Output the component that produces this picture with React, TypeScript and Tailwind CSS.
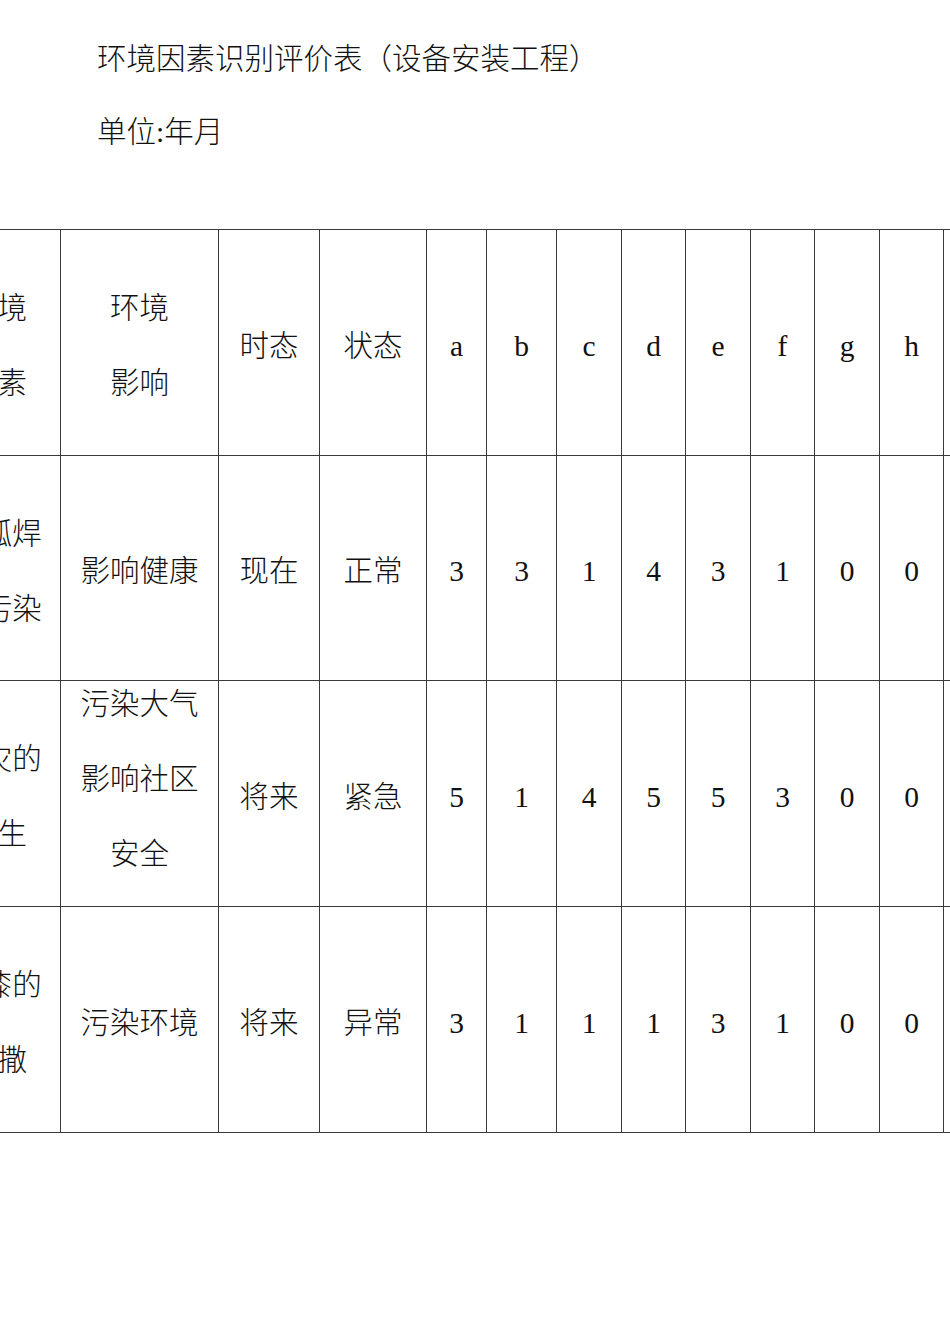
const cols = "grid-cols-[126px_158px_101px_107px_60px_70px_65px_64px_65px_64px_65px_64px_80px]"

type Row = {
  h: string
  factor: string[]
  impact: string[]
  shift?: boolean
  tense: string
  state: string
  scores: string[]
}

const rows: Row[] = [
  {
    h: "h-[225px]",
    factor: ["电弧焊", "烟污染"],
    impact: ["影响健康"],
    tense: "现在",
    state: "正常",
    scores: ["3", "3", "1", "4", "3", "1", "0", "0"],
  },
  {
    h: "h-[226px]",
    factor: ["火灾的", "发生"],
    impact: ["污染大气", "影响社区", "安全"],
    shift: true,
    tense: "将来",
    state: "紧急",
    scores: ["5", "1", "4", "5", "5", "3", "0", "0"],
  },
  {
    h: "h-[226px]",
    factor: ["油漆的", "遗撒"],
    impact: ["污染环境"],
    tense: "将来",
    state: "异常",
    scores: ["3", "1", "1", "1", "3", "1", "0", "0"],
  },
]

const letters = ["a", "b", "c", "d", "e", "f", "g", "h"]

function Cell({ h, children }: { h: string; children?: React.ReactNode }) {
  return (
    <div className={`${h} pt-[7px] border-r border-b border-[#3a3a3a] flex items-center justify-center text-center leading-[75px]`}>
      {children}
    </div>
  )
}

function Lines({ lines, shift }: { lines: string[]; shift?: boolean }) {
  return (
    <div className={shift ? "mb-[36px]" : ""}>
      {lines.map((l, i) => (
        <div key={i} className="whitespace-nowrap">{l}</div>
      ))}
    </div>
  )
}

export default function App() {
  return (
    <div className="w-[950px] h-[1344px] overflow-hidden bg-white text-[#111] font-['Liberation_Serif','Noto_Sans_CJK_SC',serif] font-light text-[29.5px]">
      <div className="pl-[97px] pt-[39px]">
        <p className="leading-[40px] whitespace-nowrap">
          环境因素识别评价表
          <span className="inline-block w-[1em] text-right">（</span>
          设备安装工程
          <span className="inline-block w-[1em] text-left">）</span>
        </p>
        <p className="mt-[33px] leading-[40px]">单位:年月</p>
      </div>

      <div className={`mt-[77px] ml-[-66px] w-max grid ${cols} border-t border-l border-[#3a3a3a]`}>
        <Cell h="h-[226px]"><Lines lines={["环境", "因素"]} /></Cell>
        <Cell h="h-[226px]"><Lines lines={["环境", "影响"]} /></Cell>
        <Cell h="h-[226px]">时态</Cell>
        <Cell h="h-[226px]">状态</Cell>
        {letters.map((l) => (
          <Cell key={l} h="h-[226px]">{l}</Cell>
        ))}
        <Cell h="h-[226px]" />

        {rows.map((r, i) => (
          <div key={i} className="contents">
            <Cell h={r.h}><Lines lines={r.factor} /></Cell>
            <Cell h={r.h}><Lines lines={r.impact} shift={r.shift} /></Cell>
            <Cell h={r.h}>{r.tense}</Cell>
            <Cell h={r.h}>{r.state}</Cell>
            {r.scores.map((s, j) => (
              <Cell key={j} h={r.h}>{s}</Cell>
            ))}
            <Cell h={r.h} />
          </div>
        ))}
      </div>
    </div>
  )
}
